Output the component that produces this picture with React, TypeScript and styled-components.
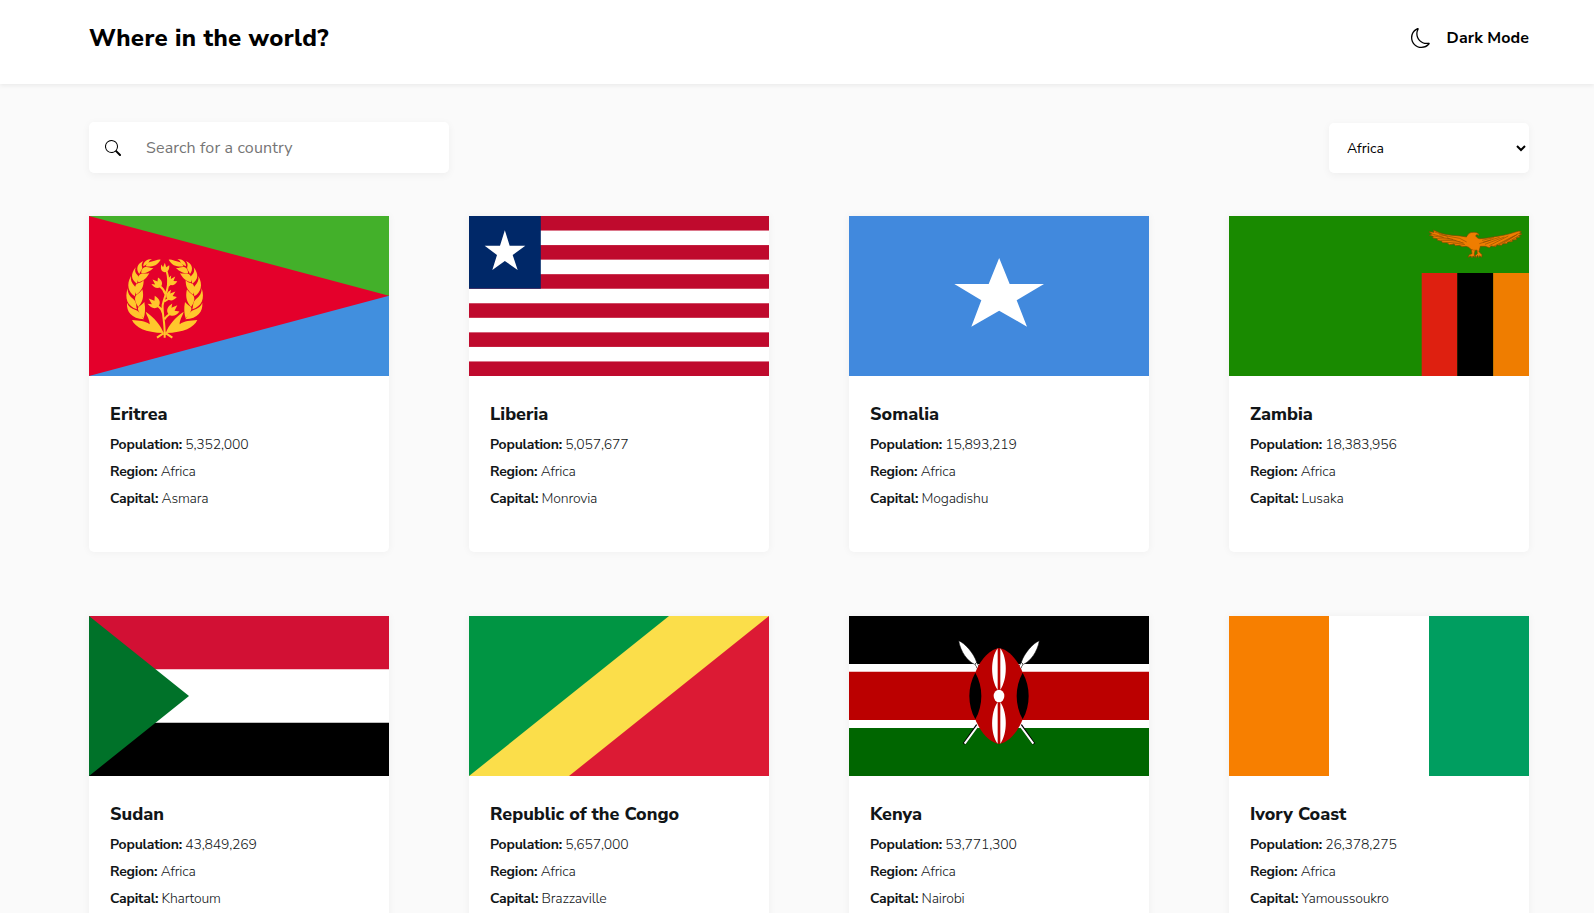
import React from 'react';
import styled, { createGlobalStyle } from 'styled-components';
import { BsMoon, BsSearch } from 'react-icons/bs';

const GlobalStyle = createGlobalStyle`
  * { box-sizing: border-box; }
  html { overflow: hidden; }
  body {
    margin: 0;
    height: 100vh;
    overflow: hidden;
    background: #fafafa;
    color: #111517;
    font-family: 'Nunito Sans', Lato, 'Open Sans', sans-serif;
  }
`;

const Header = styled.header`
  display: flex;
  justify-content: space-between;
  align-items: center;
  height: 84px;
  padding: 0 65px 8px 89px;
  background: #fff;
  color: #000;
  box-shadow: 0 2px 4px rgba(0, 0, 0, 0.06);
`;

const Title = styled.h1`
  margin: 0;
  font-size: 24px;
  line-height: 33px;
  font-weight: 800;
  letter-spacing: 0.35px;
`;

const ModeButton = styled.button`
  display: flex;
  align-items: center;
  gap: 16px;
  padding: 0;
  border: 0;
  background: none;
  color: #000;
  font: 700 16px/22px 'Nunito Sans', Lato, sans-serif;
  letter-spacing: 0.1px;
`;

const Main = styled.main`
  padding: 38px 65px 0 89px;
`;

const Filters = styled.div`
  display: flex;
  justify-content: space-between;
  align-items: flex-end;
  height: 51px;
  margin-bottom: 43px;
`;

const SearchBox = styled.label`
  display: flex;
  align-items: center;
  gap: 25px;
  width: 360px;
  height: 51px;
  padding: 0 16px;
  border-radius: 5px;
  background: #fff;
  color: #000;
  box-shadow: 0 2px 9px rgba(0, 0, 0, 0.05);
`;

const SearchInput = styled.input`
  flex: 1;
  min-width: 0;
  padding: 0;
  border: 0;
  outline: 0;
  background: none;
  font: 400 16px/22px 'Nunito Sans', Lato, sans-serif;
  letter-spacing: 0.15px;
  &::placeholder { color: #757575; }
`;

const RegionSelect = styled.select`
  width: 200px;
  height: 50px;
  padding: 0 14px;
  border: 0;
  border-radius: 5px;
  background: #fff;
  color: #000;
  font: 400 14px/19px 'Nunito Sans', Lato, sans-serif;
  box-shadow: 0 2px 9px rgba(0, 0, 0, 0.05);
`;

const Grid = styled.div`
  display: grid;
  grid-template-columns: repeat(4, 300px);
  column-gap: 80px;
  row-gap: 64px;
`;

const Card = styled.article`
  height: 336px;
  border-radius: 0 0 5px 5px;
  background: #fff;
  box-shadow: 0 0 8px rgba(0, 0, 0, 0.05);
`;

const FlagArt = styled.svg`
  display: block;
  width: 300px;
  height: 160px;
`;

const Info = styled.div`
  padding: 26px 21px 0;
`;

const Name = styled.h2`
  margin: 0 0 4px;
  font-size: 18px;
  line-height: 25px;
  font-weight: 800;
`;

const Detail = styled.p`
  margin: 0;
  font-size: 14px;
  line-height: 27px;
  font-weight: 300;
  letter-spacing: -0.2px;
`;

const Label = styled.strong`
  font-weight: 700;
`;

type Point = [number, number];

function leaf([bx, by]: Point, [tx, ty]: Point, bulge: number) {
  const dx = tx - bx;
  const dy = ty - by;
  const len = Math.hypot(dx, dy);
  const nx = (-dy / len) * bulge;
  const ny = (dx / len) * bulge;
  return `M${bx} ${by}Q${bx + dx * 0.45 + nx} ${by + dy * 0.45 + ny} ${tx} ${ty}Q${bx + dx * 0.45 - nx * 0.5} ${by + dy * 0.45 - ny * 0.5} ${bx} ${by}Z`;
}

const wreathLeaves = [
  'M51 210C61 232 91 248 146 249C137 226 118 203 92 185C96 199 105 211 104 223C90 212 72 212 51 210Z',
  'M36 158C34 185 49 205 87 208C80 199 77 186 62 180C49 175 40 169 36 158Z',
  'M88 156C92 176 90 192 86 205C77 196 68 184 69 174C72 167 82 164 88 156Z',
  'M38 115C28 145 37 169 66 178C62 167 66 155 54 146C44 139 38 130 38 115Z',
  'M82 118C88 142 82 156 70 171C62 160 58 148 61 140C66 131 76 129 82 118Z',
  'M48 78C33 104 40 127 60 139C60 127 68 117 58 107C50 98 46 91 48 78Z',
  'M86 90C86 111 80 122 64 134C57 121 59 108 65 102C73 97 81 98 86 90Z',
  'M62 52C46 73 48 89 66 101C67 91 76 82 67 75C60 68 59 62 62 52Z',
  'M103 68C96 84 86 92 70 97C66 83 71 76 77 72C87 68 96 73 103 68Z',
  'M85 33C66 41 62 58 73 72C76 63 84 57 81 50C79 44 81 39 85 33Z',
  'M116 53C104 64 96 69 79 70C78 59 84 53 91 51C100 49 109 56 116 53Z',
  'M111 27C94 27 84 37 85 49C91 44 99 43 101 38C102 32 106 30 111 27Z',
  'M137 29C126 48 111 51 92 49C97 37 106 36 113 34C123 32 128 27 137 29Z',
];

const buds: { at: Point; turn: number; size?: number }[] = [
  { at: [149, 65], turn: 5, size: 0.85 },
  { at: [136, 109], turn: -45 },
  { at: [163, 101], turn: 43, size: 0.9 },
  { at: [129, 168], turn: -48, size: 1.15 },
  { at: [158, 145], turn: 52 },
  { at: [162, 191], turn: 48, size: 1.15 },
];

const Eritrea = () => (
  <>
    <path fill="#43b02a" d="M0 0H300V80H0Z" />
    <path fill="#418fde" d="M0 80H300V160H0Z" />
    <path fill="#e4002b" d="M0 0L300 79.7L0 160Z" />
    <g transform="translate(26 34) scale(.33333)" fill="#ffc72c">
      {wreathLeaves.map((d) => (
        <g key={d}>
          <path d={d} />
          <path d={d} transform="translate(298 0) scale(-1 1)" />
        </g>
      ))}
      <path
        fill="none"
        stroke="#ffc72c"
        strokeWidth="6"
        d="M149 255C150 215 141 190 143 165C147 145 158 123 159 103C160 87 160 73 153 61M151 133C147 117 141 113 134 108M159 108L170 98M144 191C142 176 135 174 128 168M148 154L165 144M149 208C153 197 162 193 173 187"
      />
      <path fill="none" stroke="#ffc72c" strokeWidth="6" d="M149 245V263M145 250L126 263M153 250L172 263" />
      {buds.map(({ at, turn, size = 1 }) => (
        <path
          key={at.join()}
          transform={`translate(${at[0]} ${at[1]}) rotate(${turn}) scale(${size})`}
          d="M0 2C-13 0-16-10-14-24L-7-15L-2-31L4-16L14-24C17-9 12 0 0 2Z"
        />
      ))}
    </g>
  </>
);

const Liberia = () => (
  <>
    <path fill="#fff" d="M0 0H300V160H0Z" />
    {[0, 2, 4, 6, 8, 10].map((i) => (
      <rect key={i} y={(i * 160) / 11} width="300" height={160 / 11} fill="#bf0a2d" />
    ))}
    <rect width="71.8" height="72.7" fill="#002868" />
    <path
      transform="translate(-9 -11) scale(.33333)"
      fill="#fff"
      d="M134.500 76L149 122H196L158 150L173 195L134.500 168L97 195L111 150L74 122H120Z"
    />
  </>
);

const Somalia = () => (
  <>
    <path fill="#4189dd" d="M0 0H300V160H0Z" />
    <path
      transform="translate(91 24) scale(.33333)"
      fill="#fff"
      d="M177.500 54L209 132H312L230 181L261 260L177.500 212L94 260L124 181L43 132H146Z"
    />
  </>
);

const Zambia = () => (
  <>
    <path fill="#198a00" d="M0 0H300V160H0Z" />
    <path fill="#de2010" d="M192.700 57H228.500V160H192.700Z" />
    <path fill="#000" d="M228.300 57H264.300V160H228.300Z" />
    <path fill="#ef7d00" d="M264.200 57H300V160H264.200Z" />
    <g transform="translate(181 -6) scale(.33333)">
      <path
        fill="#ef7d00"
        stroke="#7c4a00"
        strokeWidth="2"
        d="M57 65L72 67L70 60L88 68C112 78 145 75 170 81C173 71 181 66 191 67C201 66 208 71 207 77C202 72 198 74 197 78C202 84 206 87 212 86C233 85 250 80 268 78C290 75 309 68 327 63L334 65L328 70L336 72L326 77L331 81L318 84L320 89L307 90L307 95L293 96L291 101L278 101L275 106L261 105L257 110L244 108L238 113L226 109L211 109L207 125L216 134L215 142L209 137L206 143L203 136L198 143L196 136L202 131L201 120L195 122L193 132L195 142L189 138L186 144L183 138L174 142L178 134L186 131L184 119L176 112L168 109L156 110L148 106L136 107L132 102L118 104L111 98L98 98L94 93L82 91L82 86L68 84L70 79L58 76L65 72Z"
      />
      <path
        fill="none"
        stroke="#864b00"
        strokeWidth="1.800"
        d="M63 71L101 82M74 66L113 79M71 78L118 86M83 86L129 88M93 92L139 91M111 98L151 95M128 102L159 99M146 106L165 103M88 74L149 85L170 96M111 83L162 100M216 91L252 83M219 97L269 82M225 103L283 81M238 107L295 78M251 109L314 77M267 104L322 73M282 99L326 70M298 94L327 77M208 101L243 90M181 118L198 121M174 83L182 91"
      />
      <path fill="#ef7d00" d="M170 82C175 72 187 68 197 73L193 80C203 88 205 95 207 103C206 113 201 118 190 119C179 111 170 99 170 82Z" />
    </g>
  </>
);

const Sudan = () => (
  <>
    <path fill="#fff" d="M0 0H300V160H0Z" />
    <path fill="#d21034" d="M0 0H300V53.300H0Z" />
    <path fill="#000" d="M0 106.700H300V160H0Z" />
    <path fill="#007229" d="M0 0L100 80L0 160Z" />
  </>
);

const Congo = () => (
  <>
    <path fill="#fbde4a" d="M0 0H300V160H0Z" />
    <path fill="#009543" d="M0 0H200L0 160Z" />
    <path fill="#dc1a34" d="M300 0V160H100Z" />
  </>
);

const Spear = () => (
  <>
    <path d="M107 158L116 176M112 345L72 402" stroke="#000" strokeWidth="9" />
    <path d="M108 160L116 176M115 345L74 401" stroke="#fff" strokeWidth="6" />
    <path d="M56 92C74 99 102 130 110 157L104 163C83 154 62 126 56 92Z" fill="#fff" stroke="#000" strokeWidth="1.500" />
  </>
);

const Kenya = () => (
  <>
    <path fill="#fff" d="M0 0H300V160H0Z" />
    <path fill="#000" d="M0 0H300V48H0Z" />
    <path fill="#b00" d="M0 55.700H300V104H0Z" />
    <path fill="#060" d="M0 112H300V160H0Z" />
    <g transform="translate(91 -6) scale(.33333)">
      <Spear />
      <g transform="translate(354 0) scale(-1 1)"><Spear /></g>
      <path fill="#b00" d="M177 114C210 119 237 158 248 188V328C237 358 210 397 177 402C144 397 117 358 106 328V188C117 158 144 119 177 114Z" />
      <path d="M106 188C130 230 130 286 106 328C82 286 82 230 106 188ZM248 188C272 230 272 286 248 328C224 286 224 230 248 188Z" />
      <path fill="#fff" d="M173 115C151 145 151 207 173 240ZM181 115C203 145 203 207 181 240ZM173 276C151 309 151 371 173 401ZM181 276C203 309 203 371 181 401Z" />
      <ellipse cx="177" cy="258" rx="16" ry="19" fill="#fff" />
    </g>
  </>
);

const IvoryCoast = () => (
  <>
    <path fill="#fff" d="M0 0H300V160H0Z" />
    <path fill="#f77f00" d="M0 0H100V160H0Z" />
    <path fill="#009e60" d="M200 0H300V160H200Z" />
  </>
);

const countries = [
  { name: 'Eritrea', population: '5,352,000', capital: 'Asmara', Flag: Eritrea },
  { name: 'Liberia', population: '5,057,677', capital: 'Monrovia', Flag: Liberia },
  { name: 'Somalia', population: '15,893,219', capital: 'Mogadishu', Flag: Somalia },
  { name: 'Zambia', population: '18,383,956', capital: 'Lusaka', Flag: Zambia },
  { name: 'Sudan', population: '43,849,269', capital: 'Khartoum', Flag: Sudan },
  { name: 'Republic of the Congo', population: '5,657,000', capital: 'Brazzaville', Flag: Congo },
  { name: 'Kenya', population: '53,771,300', capital: 'Nairobi', Flag: Kenya },
  { name: 'Ivory Coast', population: '26,378,275', capital: 'Yamoussoukro', Flag: IvoryCoast },
];

export default function App() {
  return (
    <>
      <GlobalStyle />
      <Header>
        <Title>Where in the world?</Title>
        <ModeButton>
          <BsMoon size={20} />
          Dark Mode
        </ModeButton>
      </Header>
      <Main>
        <Filters>
          <SearchBox>
            <BsSearch size={16} />
            <SearchInput placeholder="Search for a country" />
          </SearchBox>
          <RegionSelect defaultValue="Africa">
            <option>Africa</option>
          </RegionSelect>
        </Filters>
        <Grid>
          {countries.map(({ name, population, capital, Flag }) => (
            <Card key={name}>
              <FlagArt viewBox="0 0 300 160"><Flag /></FlagArt>
              <Info>
                <Name>{name}</Name>
                <Detail><Label>Population:</Label> {population}</Detail>
                <Detail><Label>Region:</Label> Africa</Detail>
                <Detail><Label>Capital:</Label> {capital}</Detail>
              </Info>
            </Card>
          ))}
        </Grid>
      </Main>
    </>
  );
}
